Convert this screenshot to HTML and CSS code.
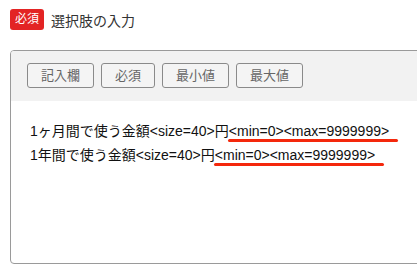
FILE: index.html
```html
<!DOCTYPE html>
<html lang="ja">
<head>
  <meta charset="UTF-8">
  <meta name="viewport" content="width=device-width, initial-scale=1.0">
  <title>選択肢の入力</title>
  <link rel="stylesheet" href="styles.css">
</head>
<body>
  <div class="field-head">
    <span class="badge">必須</span>
    <span class="field-title">選択肢の入力</span>
  </div>

  <div class="editor">
    <div class="toolbar">
      <button>記入欄</button>
      <button>必須</button>
      <button>最小値</button>
      <button>最大値</button>
    </div>
    <div class="editor-body">
      <p>1ヶ月間で使う金額&lt;size=40&gt;円<span class="mark">&lt;min=0&gt;&lt;max=9999999&gt;</span></p>
      <p>1年間で使う金額&lt;size=40&gt;円<span class="mark">&lt;min=0&gt;&lt;max=9999999&gt;</span></p>
    </div>
  </div>
</body>
</html>
```

FILE: styles.css
```css
/* Reset y tipografía */
* { box-sizing: border-box; margin: 0; padding: 0; }
body { font-family: 'Liberation Sans', 'Noto Sans CJK JP', sans-serif; background: #fff; color: #222; padding: 9px 10px 0; overflow: hidden; }

/* Cabecera del campo */
.field-head { display: flex; align-items: center; gap: 7px; height: 21px; }
.badge { background: #e32424; color: #fff; font-size: 12px; line-height: 21px; padding: 0 5px; border-radius: 3px; }
.field-title { font-size: 14px; color: #333; }

/* Editor */
.editor { margin-top: 20px; margin-right: -30px; height: 214px; border: 1px solid #9a9a9a; border-radius: 4px; overflow: hidden; }
.toolbar { display: flex; gap: 7px; background: #f2f2f2; height: 50px; padding: 12px 16px 0; }
.toolbar button { height: 25px; padding: 0 13px; font-family: inherit; font-size: 13px; line-height: 23px; color: #666; background: #f4f4f4; border: 1px solid #8a8a8a; border-radius: 3px; }

.editor-body { padding: 19px 19px; font-size: 14px; line-height: 23.5px; color: #111; }
.mark { position: relative; }
.mark::after { content: ''; position: absolute; left: -1px; right: -9px; bottom: -3px; height: 3px; border-radius: 2px; background: #f4280c; }
```
